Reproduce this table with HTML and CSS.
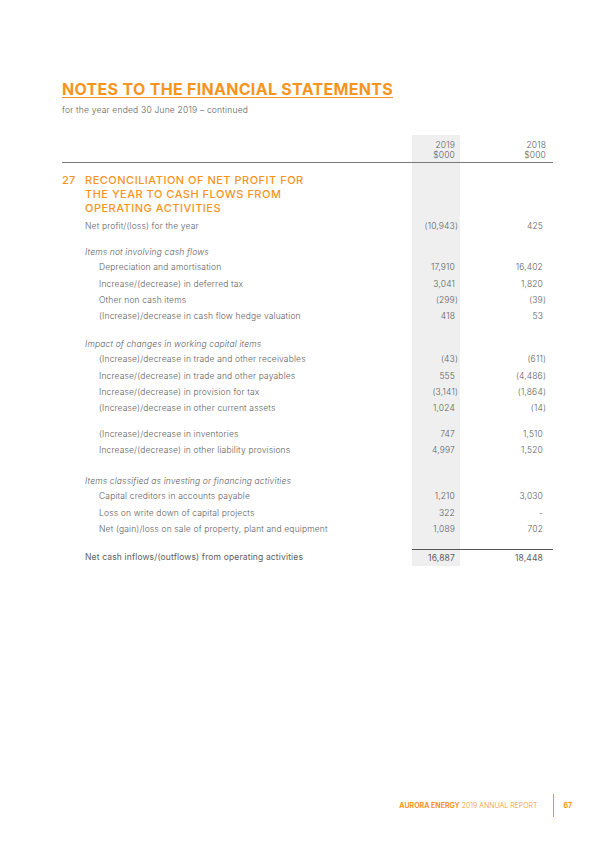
FILE: index.html
```html
<!DOCTYPE html>
<html lang="en">

<head>
    <meta charset="UTF-8">
    <meta name="viewport" content="width=device-width, initial-scale=1.0">
    <title>Notes to the financial statements</title>
    <link rel="stylesheet" href="styles.css">
</head>

<body>
    <div class="page">
        <h1 class="pageTitle">NOTES TO THE FINANCIAL STATEMENTS</h1>
        <p class="subTitle">for the year ended 30 June 2019 – continued</p>

        <div class="statement">
            <div class="row head">
                <span></span>
                <span class="num">2019<br>$000</span>
                <span class="num">2018<br>$000</span>
            </div>

            <!-- Note 27 -->
            <div class="note">
                <span class="noteNo">27</span>
                <h2 class="noteTitle">RECONCILIATION OF NET PROFIT FOR<br>THE YEAR TO CASH FLOWS FROM<br>OPERATING ACTIVITIES</h2>
            </div>

            <div class="row first">
                <span class="label">Net profit/(loss) for the year</span>
                <span class="num"><span class="neg">(10,943)</span></span>
                <span class="num">425</span>
            </div>

            <div class="row group top">
                <span class="label sub">Items not involving cash flows</span>
                <span></span><span></span>
            </div>
            <div class="row">
                <span class="label item">Depreciation and amortisation</span>
                <span class="num">17,910</span>
                <span class="num">16,402</span>
            </div>
            <div class="row">
                <span class="label item">Increase/(decrease) in deferred tax</span>
                <span class="num">3,041</span>
                <span class="num">1,820</span>
            </div>
            <div class="row">
                <span class="label item">Other non cash items</span>
                <span class="num"><span class="neg">(299)</span></span>
                <span class="num"><span class="neg">(39)</span></span>
            </div>
            <div class="row">
                <span class="label item">(Increase)/decrease in cash flow hedge valuation</span>
                <span class="num">418</span>
                <span class="num">53</span>
            </div>

            <div class="row group">
                <span class="label sub">Impact of changes in working capital items</span>
                <span></span><span></span>
            </div>
            <div class="row">
                <span class="label item">(Increase)/decrease in trade and other receivables</span>
                <span class="num"><span class="neg">(43)</span></span>
                <span class="num"><span class="neg">(611)</span></span>
            </div>
            <div class="row">
                <span class="label item">Increase/(decrease) in trade and other payables</span>
                <span class="num">555</span>
                <span class="num"><span class="neg">(4,486)</span></span>
            </div>
            <div class="row">
                <span class="label item">Increase/(decrease) in provision for tax</span>
                <span class="num"><span class="neg">(3,141)</span></span>
                <span class="num"><span class="neg">(1,864)</span></span>
            </div>
            <div class="row">
                <span class="label item">(Increase)/decrease in other current assets</span>
                <span class="num">1,024</span>
                <span class="num"><span class="neg">(14)</span></span>
            </div>
            <div class="row split">
                <span class="label item">(Increase)/decrease in inventories</span>
                <span class="num">747</span>
                <span class="num">1,510</span>
            </div>
            <div class="row">
                <span class="label item">Increase/(decrease) in other liability provisions</span>
                <span class="num">4,997</span>
                <span class="num">1,520</span>
            </div>

            <div class="row group wide">
                <span class="label sub">Items classified as investing or financing activities</span>
                <span></span><span></span>
            </div>
            <div class="row">
                <span class="label item">Capital creditors in accounts payable</span>
                <span class="num">1,210</span>
                <span class="num">3,030</span>
            </div>
            <div class="row">
                <span class="label item">Loss on write down of capital projects</span>
                <span class="num">322</span>
                <span class="num">-</span>
            </div>
            <div class="row">
                <span class="label item">Net (gain)/loss on sale of property, plant and equipment</span>
                <span class="num">1,089</span>
                <span class="num">702</span>
            </div>

            <div class="row total">
                <span class="label">Net cash inflows/(outflows) from operating activities</span>
                <span class="num">16,887</span>
                <span class="num">18,448</span>
            </div>
        </div>

        <div class="footer">
            <span class="footText"><b>AURORA ENERGY</b> 2019 ANNUAL REPORT</span>
            <span class="footRule"></span>
            <span class="pageNo">67</span>
        </div>
    </div>
</body>

</html>
```

FILE: styles.css
```css
body {
    margin: 0;
    background: #ffffff;
    font-family: Inter, "Open Sans", Arial, sans-serif;
    color: #5e5e5e;
}

.page {
    width: 596px;
    min-height: 844px;
    box-sizing: border-box;
    padding: 79px 43px 27px 62px;
    display: flex;
    flex-direction: column;
}

.pageTitle {
    margin: 0;
    font-size: 16px;
    line-height: 20px;
    font-weight: 700;
    letter-spacing: 0.3px;
    color: #f7941d;
    text-decoration: underline;
    text-decoration-thickness: 1px;
    text-underline-offset: 2px;
}

.subTitle {
    margin: 6px 0 0;
    font-size: 8.5px;
    line-height: 10px;
    font-weight: 300;
    letter-spacing: 0.2px;
}

.statement {
    margin-top: 20px;
    /* shaded 2019 column */
    background: linear-gradient(to right, transparent 350px, #efefef 350px, #efefef 398px, transparent 398px);
}

.row {
    display: grid;
    grid-template-columns: 350px 48px 93px;
    font-size: 8.5px;
    line-height: 16px;
    font-weight: 300;
    letter-spacing: 0.15px;
}

.num {
    text-align: right;
    padding-right: 5px;
}

.num + .num {
    padding-right: 10px;
}

.neg {
    margin-right: -3px;
}

.head {
    line-height: 10px;
    padding: 5px 0 2px;
    border-bottom: 1px solid #7a7a7a;
}

.head .num + .num {
    padding-right: 7px;
}

.note {
    display: flex;
    margin-top: 10px;
    color: #f7941d;
    font-size: 11px;
    line-height: 14px;
    font-weight: 500;
    letter-spacing: 0.5px;
}

.noteNo {
    width: 23px;
    letter-spacing: 0.2px;
}

.noteTitle {
    margin: 0;
    font-size: inherit;
    font-weight: inherit;
}

.label {
    padding-left: 23px;
}

.label.item {
    padding-left: 37px;
}

.sub {
    font-style: italic;
}

.first {
    margin-top: 3px;
}

.group {
    margin-top: 12px;
}

.group.top {
    margin-top: 10px;
}

.group + .row {
    margin-top: -1px;
}

.group + .row + .row {
    margin-top: 1px;
}

.split {
    margin-top: 10px;
}

.wide {
    margin-top: 15px;
}

.total {
    margin-top: 12px;
    font-weight: 400;
}

.total .num {
    border-top: 1px solid #555;
}

.footer {
    margin-top: auto;
    margin-right: -19px;
    display: flex;
    align-items: center;
    justify-content: flex-end;
    color: #f7941d;
    font-size: 7px;
}

.footText {
    font-weight: 300;
}

.footText b {
    font-weight: 700;
}

.footRule {
    width: 1px;
    height: 23px;
    margin: 0 9px 0 16px;
    background: #f7941d;
}

.pageNo {
    font-weight: 700;
    font-size: 7px;
}
```
